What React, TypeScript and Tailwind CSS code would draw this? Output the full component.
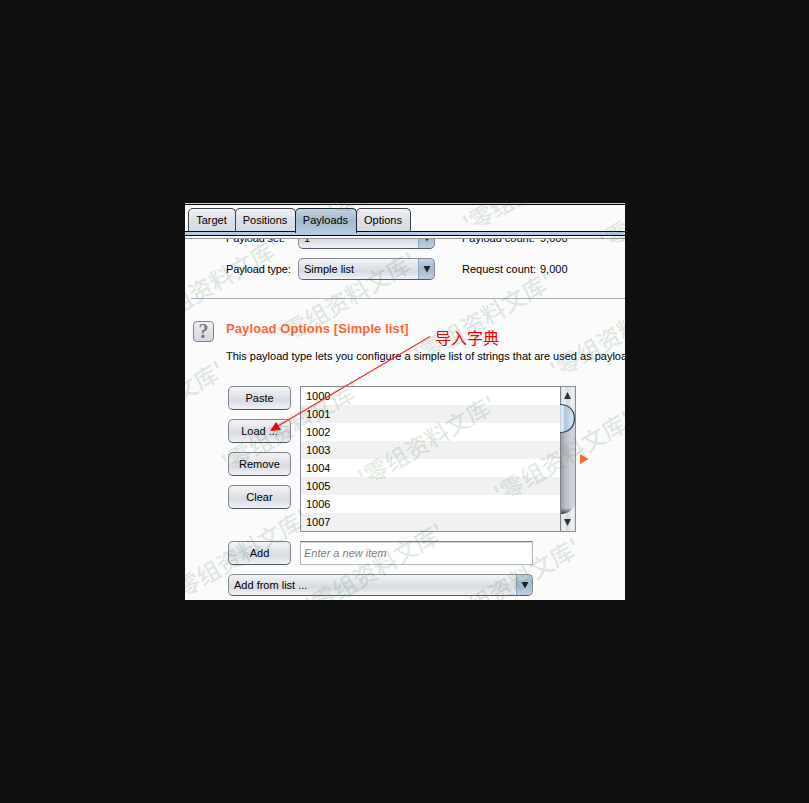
import type { ReactNode } from "react";

const ITEMS = ["1000", "1001", "1002", "1003", "1004", "1005", "1006", "1007"];

const WATERMARKS: [number, number][] = [
  [211, -30], [347, -16], [483, 1],
  [26, 81], [162, 95], [298, 115], [434, 130],
  [-30, 204], [106, 223], [242, 238], [378, 254],
  [54, 352], [190, 366], [326, 381],
];

function Tab({ label, width, active }: { label: string; width: string; active?: boolean }) {
  return (
    <div
      className={`-mr-px flex justify-center rounded-t-[5px] border border-b-0 pt-[5px] pr-px ${width} ${
        active
          ? "z-10 h-[25px] border-[#1c2530] bg-linear-to-b from-[#c3d3e0] via-[#a3bace] to-[#b4c9df]"
          : "h-[23px] border-[#3f444d] bg-linear-to-b from-[#f1f2f5] via-[#dcdfe5] to-[#d6d9df]"
      }`}
    >
      {label}
    </div>
  );
}

function Button({ children }: { children: ReactNode }) {
  return (
    <button className="flex h-[24px] w-[63px] items-center justify-center rounded-[5px] border border-[#80848b] border-b-[#50545b] bg-linear-to-b from-[#f3f4f6] via-[#d8dbe1] via-60% to-[#f0f2f9]">
      {children}
    </button>
  );
}

function Combo({ children, className }: { children: ReactNode; className: string }) {
  return (
    <div
      className={`flex h-[22px] shrink-0 overflow-hidden rounded-[5px] border border-[#868b95] border-b-[#535a66] bg-linear-to-b from-[#f3f4f6] via-[#d8dbe1] via-60% to-[#f0f2f8] ${className}`}
    >
      <span className="flex-1 pl-[5px] leading-[20px]">{children}</span>
      <span className="-my-px -mr-px flex w-[17px] items-center justify-center rounded-r-[5px] border border-[#5b7a96] border-b-[#304a64] border-r-[#304a64] border-l-[#8da5bc] bg-linear-to-b from-[#c5d4e1] via-[#a3bacf] to-[#b9d0e6]">
        <svg width="8" height="8" viewBox="0 0 8 8">
          <path d="M0.500 1h7L4 7.500z" fill="#1c2025" />
        </svg>
      </span>
    </div>
  );
}

function ScrollBar() {
  return (
    <svg width="15" height="144" viewBox="0 0 15 144" className="shrink-0">
      <defs>
        <linearGradient id="cap">
          <stop offset="0" stopColor="#d5d8dd" />
          <stop offset=".25" stopColor="#eceef0" />
          <stop offset=".5" stopColor="#d9dcdf" />
          <stop offset=".85" stopColor="#f1f2f4" />
          <stop offset="1" stopColor="#dfe1e5" />
        </linearGradient>
        <linearGradient id="track">
          <stop offset="0" stopColor="#9799a0" />
          <stop offset=".35" stopColor="#bbbdc5" />
          <stop offset=".75" stopColor="#cfd0d8" />
          <stop offset="1" stopColor="#d2d3da" />
        </linearGradient>
        <linearGradient id="thumb">
          <stop offset="0" stopColor="#bdd0e2" />
          <stop offset=".18" stopColor="#e6eef6" />
          <stop offset=".35" stopColor="#acc4da" />
          <stop offset=".85" stopColor="#d2e6f5" />
          <stop offset="1" stopColor="#c2dced" />
        </linearGradient>
        <linearGradient id="end" x2="0" y2="1">
          <stop offset="0" stopColor="#4c4d50" stopOpacity="0" />
          <stop offset="1" stopColor="#38393c" />
        </linearGradient>
      </defs>
      <rect width="15" height="144" fill="url(#cap)" />
      <path d="M0 24H15V118Q10 127 0 127Z" fill="url(#track)" />
      <path d="M0 121H13Q8 127 0 127Z" fill="url(#end)" />
      <path d="M.500 0V144" stroke="#7c828b" />
      <path d="M0 17.500C9 17.500 14.400 23 14.400 31.500S9 45.500 0 45.500" fill="url(#thumb)" stroke="#2b415a" strokeWidth="1.200" />
      <path d="M4 12h7L7.500 5z" fill="#303236" />
      <path d="M4 132h7l-3.500 7z" fill="#303236" />
    </svg>
  );
}

function Overlay() {
  return (
    <svg className="pointer-events-none absolute inset-0 z-20" width="440" height="397" viewBox="0 0 440 397">
      <g fill="#3f7a4c" fillOpacity=".165" fontSize="23.5" fontWeight="500" textAnchor="middle" fontFamily="'Noto Sans CJK SC', sans-serif">
        {WATERMARKS.map(([x, y]) => (
          <text key={`${x},${y}`} transform={`translate(${x} ${y}) rotate(-30.3)`} y="9">
            '零组资料文库'
          </text>
        ))}
      </g>
      <path d="M245 133.500L93 223" stroke="#ee2a2a" strokeWidth="1.100" />
      <path d="M85 228L91 219L96 227Z" fill="#f50000" />
    </svg>
  );
}

export default function App() {
  return (
    <div className="flex h-[803px] w-[809px] items-start bg-[#0f0f0f] pt-[203px] pl-[185px] font-['Liberation_Sans',Arial,'Noto_Sans_CJK_SC',sans-serif] text-[11px] leading-[13px] text-black">
      <main className="relative flex h-[397px] w-[440px] flex-col overflow-hidden bg-[#fbfbfb]">
        <div className="h-[2px] shrink-0 border-b border-black bg-[#b9cbdc]" />
        <nav className="flex h-[26px] shrink-0 items-start pt-[3px] pl-[3px]">
          <Tab label="Target" width="w-[48px]" />
          <Tab label="Positions" width="w-[61px]" />
          <Tab label="Payloads" width="w-[62px]" active />
          <Tab label="Options" width="w-[55px]" />
        </nav>
        <div className="h-[5px] shrink-0 border-y border-[#05050f] bg-[#b8cbe4]" />
        <div className="h-[3px] shrink-0 border-b border-[#92949c]" />

        <div className="flex h-[361px] flex-col overflow-hidden">
          <section className="-mt-[12px] flex h-[71px] shrink-0 flex-col gap-[9px] pl-[41px]">
            <div className="flex h-[22px] items-center">
              <span className="w-[72px] tracking-[-0.15px]">Payload set:</span>
              <Combo className="w-[137px]">1</Combo>
              <span className="ml-[27px] w-[78px]">Payload count:</span>
              <span>9,000</span>
            </div>
            <div className="flex h-[22px] items-center">
              <span className="w-[72px] tracking-[-0.15px]">Payload type:</span>
              <Combo className="w-[137px]">Simple list</Combo>
              <span className="ml-[27px] w-[78px]">Request count:</span>
              <span>9,000</span>
            </div>
          </section>
          <div className="ml-[6px] h-px shrink-0 bg-[#a5abb7]" />

          <section className="flex shrink-0 pt-[22px] pl-[8px]">
            <div className="flex h-[21px] w-[21px] shrink-0 items-center justify-center rounded-[4px] border border-[#7e828a] bg-linear-to-b from-[#f0f1f4] to-[#d3d6dc] font-['Liberation_Serif',serif] text-[20px] font-bold text-[#777a7f]">
              ?
            </div>
            <div className="ml-[12px] flex flex-col whitespace-nowrap">
              <div className="flex h-[29px]">
                <h1 className="w-[209px] text-[13px] leading-[16px] font-bold tracking-[0.1px] text-[#ff6633]">Payload Options [Simple list]</h1>
                <span className="pt-[7px] font-['Noto_Sans_CJK_SC',sans-serif] text-[16px] leading-[18px] text-[#f00000]">导入字典</span>
              </div>
              <p>This payload type lets you configure a simple list of strings that are used as payload</p>
            </div>
          </section>

          <section className="flex shrink-0 pt-[23px] pl-[43px]">
            <div className="flex flex-col gap-[9px]">
              <Button>Paste</Button>
              <Button>Load ...</Button>
              <Button>Remove</Button>
              <Button>Clear</Button>
            </div>
            <div className="ml-[9px] flex h-[146px] w-[276px] border border-[#878c96] bg-white">
              <ul className="w-[259px]">
                {ITEMS.map((item) => (
                  <li key={item} className="h-[18px] pl-[5px] leading-[18px] even:bg-[#f1f1f1]">
                    {item}
                  </li>
                ))}
              </ul>
              <ScrollBar />
            </div>
            <svg width="9" height="10" viewBox="0 0 9 10" className="mt-[68px] ml-[4px]">
              <path d="M0 0L8.500 5L0 10Z" fill="#ff6633" />
            </svg>
          </section>

          <div className="mt-[9px] flex shrink-0 gap-[9px] pl-[43px]">
            <Button>Add</Button>
            <div className="h-[24px] w-[233px] border border-[#b4b6bb] border-t-[#7c7e83] bg-white pl-[3px] leading-[22px] text-[#808080] italic shadow-[inset_0_1px_1px_#d3d3d3]">
              Enter a new item
            </div>
          </div>
          <div className="mt-[9px] pl-[43px]">
            <Combo className="w-[305px]">Add from list ...</Combo>
          </div>
        </div>
        <Overlay />
      </main>
    </div>
  );
}
